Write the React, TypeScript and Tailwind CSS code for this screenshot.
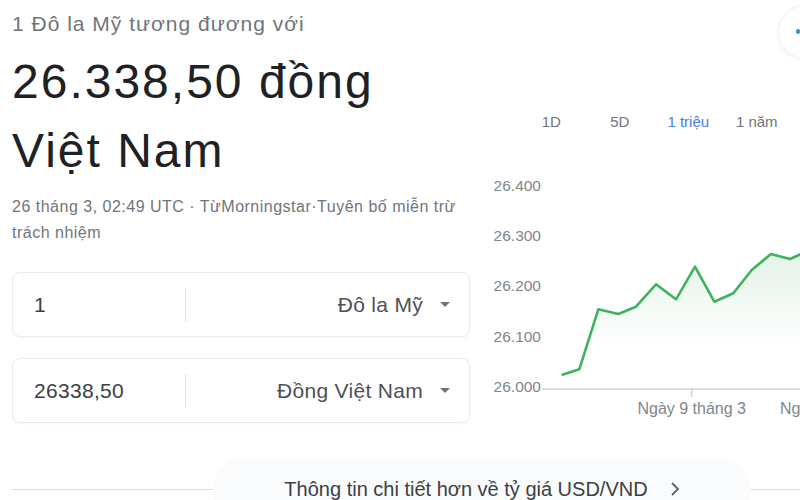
const points: [number, number][] = [
  [81.7, 215], [99.3, 209.3], [118.3, 149.3], [138.3, 154], [156, 146.7], [176, 124.3],
  [196, 139.3], [215, 106.7], [234.3, 141.7], [253.3, 133.3], [271.7, 110], [291, 94],
  [310, 99], [330, 90],
];

const yLabels = [
  { label: '26.400', y: 27 },
  { label: '26.300', y: 77 },
  { label: '26.200', y: 127 },
  { label: '26.100', y: 178 },
  { label: '26.000', y: 228 },
];

const tabs = ['1D', '5D', '1 triệu', '1 năm'];

function CurrencyBox({ value, unit }: { value: string; unit: string }) {
  return (
    <div className="flex h-[65px] items-center rounded-lg border border-[#ebebeb] shadow-[0_1px_3px_rgba(0,0,0,0.04)]">
      <div className="w-[172px] pl-[21px] text-[21px] tracking-[0.3px] text-[#3c4043]">{value}</div>
      <div className="h-[34px] w-px bg-[#e3e3e3]" />
      <div className="flex flex-1 items-center justify-end gap-[17px] pr-[19px]">
        <span className="text-[21px] tracking-[0.3px] text-[#4d5156]">{unit}</span>
        <span className="h-0 w-0 border-x-[5px] border-t-[5px] border-x-transparent border-t-[#70757a]" />
      </div>
    </div>
  );
}

function Chart() {
  const line = points.map((p) => p.join(',')).join(' ');
  const area = `${line} 330,229 81.7,229`;
  return (
    <svg width="320" height="260" viewBox="0 0 320 260" className="block overflow-visible">
      <defs>
        <linearGradient id="fill" x1="0" y1="0" x2="0" y2="1">
          <stop offset="0" stopColor="#34a853" stopOpacity="0.14" />
          <stop offset="0.7" stopColor="#34a853" stopOpacity="0" />
        </linearGradient>
      </defs>
      {yLabels.map((l) => (
        <text key={l.label} x="61" y={l.y} textAnchor="end" dominantBaseline="middle" fontSize="15.5" fill="#80868b" fontFamily="'Liberation Sans', Arial, sans-serif">
          {l.label}
        </text>
      ))}
      <polygon points={area} fill="url(#fill)" />
      <line x1="62" y1="229" x2="320" y2="229" stroke="#cfd1d4" strokeWidth="1.5" />
      <line x1="211.7" y1="229" x2="211.7" y2="237" stroke="#cfd1d4" strokeWidth="1.5" />
      <polyline points={line} fill="none" stroke="#3fb25f" strokeWidth="2.6" strokeLinejoin="round" />
      <text x="211.7" y="250" textAnchor="middle" dominantBaseline="middle" fontSize="16" fill="#80868b" fontFamily="'Liberation Sans', Arial, sans-serif">
        Ngày 9 tháng 3
      </text>
      <text x="300" y="250" dominantBaseline="middle" fontSize="16" fill="#80868b" fontFamily="'Liberation Sans', Arial, sans-serif">
        Ngày 16 tháng 3
      </text>
    </svg>
  );
}

export default function App() {
  return (
    <div className="relative h-[500px] w-[800px] overflow-hidden bg-white font-['Liberation_Sans',Arial,sans-serif]">
      <div className="flex">
        <div className="ml-3 w-[458px]">
          <p className="mt-[10px] text-[21px] leading-[28px] tracking-[1px] text-[#70757a]">1 Đô la Mỹ tương đương với</p>
          <div className="mt-[9px] text-[48px] leading-[69px] tracking-[2px] text-[#202124]">
            26.338,50 đồng
            <br />
            Việt Nam
          </div>
          <p className="mt-[9px] whitespace-nowrap text-[16px] leading-[26px] tracking-[0.5px] text-[#70757a]">
            26 tháng 3, 02:49 UTC · TừMorningstar·Tuyên bố miễn trừ
            <br />
            trách nhiệm
          </p>
          <div className="mt-[26px] flex flex-col gap-[21px]">
            <CurrencyBox value="1" unit="Đô la Mỹ" />
            <CurrencyBox value="26338,50" unit="Đồng Việt Nam" />
          </div>
        </div>
        <div className="ml-[10px] flex-1 pt-[106px]">
          <div className="ml-[37px] flex h-[32px] items-center">
            {tabs.map((t) => (
              <span key={t} className={`w-[68.5px] shrink-0 text-center text-[15px] ${t === '1 triệu' ? 'text-[#4a7ee8]' : 'text-[#70757a]'}`}>
                {t}
              </span>
            ))}
          </div>
          <div className="mt-[22px]">
            <Chart />
          </div>
        </div>
      </div>
      <div className="mt-[34px] flex items-center">
        <div className="ml-3 h-px w-[201px] bg-[#dadce0]" />
        <div className="flex h-[64px] w-[538px] items-center justify-center gap-[22px] rounded-full bg-[#fafbfc]">
          <span className="text-[20px] text-[#3c4043]">Thông tin chi tiết hơn về tỷ giá USD/VND</span>
          <svg width="10" height="16" viewBox="0 0 10 16" className="shrink-0">
            <path d="M2 2l6 6-6 6" fill="none" stroke="#5f6368" strokeWidth="1.8" />
          </svg>
        </div>
        <div className="h-px flex-1 bg-[#dadce0]" />
      </div>
      <div className="absolute left-[778px] top-[5px] h-[54px] w-[54px] rounded-full border border-[#eceff1] bg-white shadow-[0_1px_4px_rgba(0,0,0,0.06)]">
        <span className="absolute left-[17px] top-[23px] h-[5px] w-[4px] rounded-full bg-[#4285f4]" />
      </div>
    </div>
  );
}
